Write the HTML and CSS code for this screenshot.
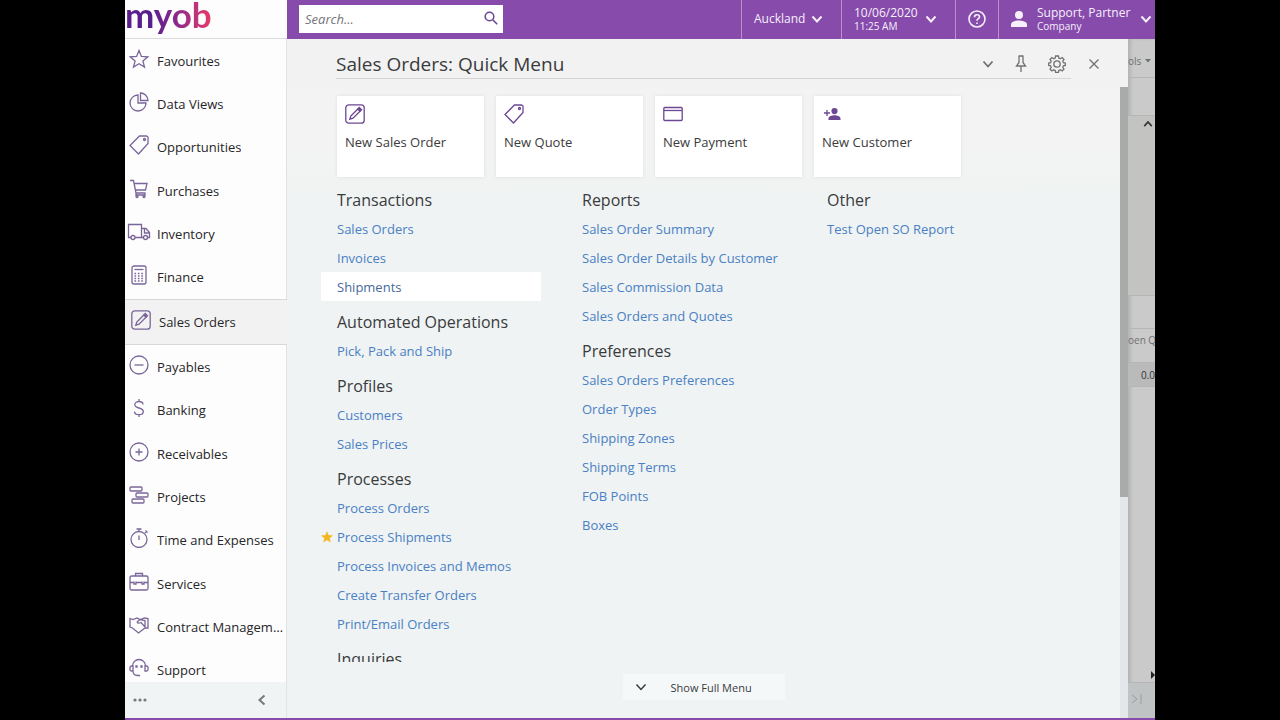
FILE: index.html
```html
<!DOCTYPE html>
<html lang="en">
<head>
    <meta charset="UTF-8">
    <meta name="viewport" content="width=device-width, initial-scale=1.0">
    <title>Sales Orders: Quick Menu</title>
    <link rel="stylesheet" href="styles.css">
</head>
<body>
    <!-- shared icons -->
    <svg class="defs" aria-hidden="true">
        <symbol id="chevron" viewBox="0 0 12 12"><path d="M1.5 3.5 6 8.5l4.5-5"/></symbol>
        <symbol id="pencil" viewBox="0 0 20 20"><rect x=".8" y=".8" width="18.4" height="18.4" rx="3"/><path d="m4.800 15.200 1-3.200 7-7 2.200 2.200-7 7z"/><path class="solid" d="m13 4.800 1.300-1.300 2.200 2.200L15.200 7z"/></symbol>
        <symbol id="tag" viewBox="0 0 20 20"><path d="M10.500 1H17.500L19 2v6.500L9.500 19 1 10.500z"/><circle cx="15.500" cy="4.500" r="1"/></symbol>
        <symbol id="star" viewBox="0 0 20 20"><path d="m10 1.500 2.400 5.900 6.400.4-4.900 4.100 1.600 6.200L10 14.700l-5.500 3.400 1.600-6.200-4.900-4.100 6.400-.4z"/></symbol>
    </svg>

    <div class="app">
        <aside class="sidebar">
            <div class="brand"><a href="#" class="logo">myob</a></div>
            <nav class="modules">
                <ul>
                    <li><a href="#"><svg class="icon"><use href="#star"/></svg><span>Favourites</span></a></li>
                    <li><a href="#"><svg class="icon" viewBox="0 0 20 20"><path d="M9 3a8 8 0 1 0 8 8H9z"/><path d="M11.500 1v7.500H19A7.500 7.500 0 0 0 11.500 1z"/></svg><span>Data Views</span></a></li>
                    <li><a href="#"><svg class="icon"><use href="#tag"/></svg><span>Opportunities</span></a></li>
                    <li><a href="#"><svg class="icon" viewBox="0 0 20 20"><path d="M1 1.500h3.500L7 14h9.500M5 4.500h13L16.500 11H6.500M7 14v2h9v-2"/><circle cx="8" cy="17.500" r="1"/><circle cx="15" cy="17.500" r="1"/></svg><span>Purchases</span></a></li>
                    <li><a href="#"><svg class="icon wide" viewBox="0 0 24 20"><path d="M4 15.500H1.500V2.500h13v13H8M14.500 6.500h4.500l3.500 4v5H21M16 15.500h-1.500M17.500 6.500v4.500h5"/><circle cx="6" cy="15.500" r="2"/><circle cx="18.500" cy="15.500" r="2"/></svg><span>Inventory</span></a></li>
                    <li><a href="#"><svg class="icon" viewBox="0 0 20 20"><rect x="3" y="1" width="14" height="18" rx="2"/><path d="M5.500 4.500h9"/><path stroke-dasharray="1.600 1.800" d="M5.500 8.500h9M5.500 11h9M5.500 13.500h9M5.500 16h9"/></svg><span>Finance</span></a></li>
                    <li class="active"><a href="#"><svg class="icon"><use href="#pencil"/></svg><span>Sales Orders</span></a></li>
                    <li><a href="#"><svg class="icon" viewBox="0 0 20 20"><circle cx="10" cy="10" r="9"/><path d="M5.500 10h9"/></svg><span>Payables</span></a></li>
                    <li><a href="#"><svg class="icon" viewBox="0 0 20 20"><path d="M14 6.500C14 4.500 12 3.500 10 3.500S5.800 4.500 5.800 6.500 8 9.500 10 10s4.300 1.300 4.300 3.500-2 3.200-4.300 3.200-4.500-1.200-4.500-3.200M10 1v2.500M10 16.700V19"/></svg><span>Banking</span></a></li>
                    <li><a href="#"><svg class="icon" viewBox="0 0 20 20"><circle cx="10" cy="10" r="9"/><path d="M6.500 10h7M10 6.500v7"/></svg><span>Receivables</span></a></li>
                    <li><a href="#"><svg class="icon" viewBox="0 0 20 20"><rect x="1" y="2" width="12" height="4" rx="1"/><rect x="7" y="8" width="12" height="4" rx="1"/><rect x="3" y="14" width="12" height="4" rx="1"/></svg><span>Projects</span></a></li>
                    <li><a href="#"><svg class="icon" viewBox="0 0 20 20"><circle cx="10" cy="11.500" r="8"/><path d="M7.500 1h5M10 1v2.500M10 7.500v4.500M16 5l1.500-1.500M16.500 2.500l2 2"/></svg><span>Time and Expenses</span></a></li>
                    <li><a href="#"><svg class="icon" viewBox="0 0 20 20"><rect x="1" y="4" width="18" height="14" rx="1.500"/><path d="M6.500 4V1.500h7V4M1 10.500h4m2 0h6m2 0h4M5 9.500v2.500h2V9.500M13 9.500v2.500h2V9.500"/></svg><span>Services</span></a></li>
                    <li><a href="#"><svg class="icon" viewBox="0 0 20 20"><path d="M1 3.500l3 1 4-1.500 3 1.500L15.500 3l3.500.5V13h-3l-6.500 5-6-5L1 12zM8 7l3-2.500 5 1V13M8 7c1 2 3 1 4 .5l4 4.500"/></svg><span>Contract Management</span></a></li>
                    <li><a href="#"><svg class="icon" viewBox="0 0 20 20"><path d="M3.500 8a6.500 6.500 0 0 1 13 0M4 8H2.500A1.500 1.500 0 0 0 1 9.500v2A1.500 1.500 0 0 0 2.500 13H4zM16 8h1.500A1.500 1.500 0 0 1 19 9.500v2a1.500 1.500 0 0 1-1.500 1.500H16zM4 13c0 3 2 4.500 4.500 4.500H11"/><path class="solid" d="M7 8h1v1H7zM12 8h1v1h-1z"/></svg><span>Support</span></a></li>
                </ul>
            </nav>
            <div class="sidebar-footer">
                <button type="button" aria-label="More items"><svg width="14" height="4" viewBox="0 0 14 4"><circle cx="2" cy="2" r="1.600"/><circle cx="7" cy="2" r="1.600"/><circle cx="12" cy="2" r="1.600"/></svg></button>
                <button type="button" aria-label="Collapse"><svg class="chevron left"><use href="#chevron"/></svg></button>
            </div>
        </aside>

        <div class="main">
            <header class="topbar">
                <form class="search">
                    <input type="search" placeholder="Search..." aria-label="Search">
                    <button type="submit" aria-label="Search"><svg width="14" height="14" viewBox="0 0 14 14"><circle cx="5.500" cy="5.500" r="4.300"/><path d="m8.700 8.700 4.500 4.500"/></svg></button>
                </form>
                <button type="button" class="branch"><span>Auckland</span><svg class="chevron"><use href="#chevron"/></svg></button>
                <button type="button" class="date"><span>10/06/2020<small>11:25 AM</small></span><svg class="chevron"><use href="#chevron"/></svg></button>
                <button type="button" class="help" aria-label="Help"><svg width="18" height="18" viewBox="0 0 18 18"><circle cx="9" cy="9" r="8"/><path d="M6.500 7.200C6.500 5.500 7.600 4.700 9 4.700s2.500.9 2.500 2.200C11.500 8.700 9 8.700 9 10.700"/><path d="M9 12.400v1.500"/></svg></button>
                <button type="button" class="user">
                    <svg class="person" width="16" height="16" viewBox="0 0 16 16"><circle cx="8" cy="4" r="4"/><path d="M0 16v-2.500C0 10.500 5 9.500 8 9.500s8 1 8 4V16z"/></svg>
                    <span>Support, Partner<small>Company</small></span>
                    <svg class="chevron"><use href="#chevron"/></svg>
                </button>
            </header>

            <div class="workspace">
                <section class="panel">
                    <div class="panel-header">
                        <div class="panel-title">
                            <h1>Sales Orders: Quick Menu</h1>
                            <button type="button" aria-label="Expand"><svg class="chevron"><use href="#chevron"/></svg></button>
                            <button type="button" aria-label="Pin"><svg width="12" height="18" viewBox="0 0 12 18"><path d="M3.500 1h5M4 1v6.500L1.500 11h9L8 7.500V1M6 11v6"/></svg></button>
                            <button type="button" aria-label="Settings"><svg width="18" height="18" viewBox="0 0 18 18"><circle cx="9" cy="9" r="3.200"/><path d="M7.600 1h2.800l.4 2.100 1.500.6 1.800-1.200 1.900 1.900-1.200 1.800.6 1.500 1.900.4v2.300l-1.900.4-.6 1.500 1.200 1.800-1.900 1.900-1.800-1.200-1.500.6-.4 1.900H7.600l-.4-1.900-1.500-.6-1.800 1.200L2 14.100l1.200-1.800-.6-1.500-1.900-.4V8.100l1.900-.4.6-1.500L2 4.400l1.900-1.900 1.800 1.200 1.500-.6z"/></svg></button>
                        </div>
                        <button type="button" aria-label="Close"><svg width="12" height="12" viewBox="0 0 12 12"><path d="m1.500 1.500 9 9m0-9-9 9"/></svg></button>
                    </div>

                    <div class="panel-body">
                        <div class="panel-content">
                            <div class="scroll-area">
                                <div class="tiles">
                                    <a href="#" class="tile"><svg class="icon"><use href="#pencil"/></svg>New Sales Order</a>
                                    <a href="#" class="tile"><svg class="icon"><use href="#tag"/></svg>New Quote</a>
                                    <a href="#" class="tile"><svg class="icon" viewBox="0 0 20 20"><rect x=".8" y="3.500" width="18.400" height="13" rx="1"/><path d="M1 6.500h18"/></svg>New Payment</a>
                                    <a href="#" class="tile"><svg class="icon" viewBox="0 0 20 20"><path d="M2 9h6M5 6v6"/><path class="solid flat" d="M12.500 4a3 3 0 1 1 0 6.200 3 3 0 0 1 0-6.200zM6.500 16v-1.500c0-2.200 3.500-3.300 6-3.300s6 1.100 6 3.300V16z"/></svg>New Customer</a>
                                </div>

                                <div class="columns">
                                    <div class="column">
                                        <h2>Transactions</h2>
                                        <ul>
                                            <li><a href="#">Sales Orders</a></li>
                                            <li><a href="#">Invoices</a></li>
                                            <li class="hover"><a href="#">Shipments</a></li>
                                        </ul>
                                        <h2>Automated Operations</h2>
                                        <ul>
                                            <li><a href="#">Pick, Pack and Ship</a></li>
                                        </ul>
                                        <h2>Profiles</h2>
                                        <ul>
                                            <li><a href="#">Customers</a></li>
                                            <li><a href="#">Sales Prices</a></li>
                                        </ul>
                                        <h2>Processes</h2>
                                        <ul>
                                            <li><a href="#">Process Orders</a></li>
                                            <li class="favourite"><svg><use href="#star"/></svg><a href="#">Process Shipments</a></li>
                                            <li><a href="#">Process Invoices and Memos</a></li>
                                            <li><a href="#">Create Transfer Orders</a></li>
                                            <li><a href="#">Print/Email Orders</a></li>
                                        </ul>
                                        <h2>Inquiries</h2>
                                    </div>
                                    <div class="column">
                                        <h2>Reports</h2>
                                        <ul>
                                            <li><a href="#">Sales Order Summary</a></li>
                                            <li><a href="#">Sales Order Details by Customer</a></li>
                                            <li><a href="#">Sales Commission Data</a></li>
                                            <li><a href="#">Sales Orders and Quotes</a></li>
                                        </ul>
                                        <h2>Preferences</h2>
                                        <ul>
                                            <li><a href="#">Sales Orders Preferences</a></li>
                                            <li><a href="#">Order Types</a></li>
                                            <li><a href="#">Shipping Zones</a></li>
                                            <li><a href="#">Shipping Terms</a></li>
                                            <li><a href="#">FOB Points</a></li>
                                            <li><a href="#">Boxes</a></li>
                                        </ul>
                                    </div>
                                    <div class="column">
                                        <h2>Other</h2>
                                        <ul>
                                            <li><a href="#">Test Open SO Report</a></li>
                                        </ul>
                                    </div>
                                </div>
                            </div>
                            <div class="panel-footer">
                                <button type="button"><svg class="chevron"><use href="#chevron"/></svg>Show Full Menu</button>
                            </div>
                        </div>
                        <div class="scrollbar"><div class="thumb"></div></div>
                    </div>
                </section>

                <!-- edge of the form that sits behind the menu -->
                <div class="behind">
                    <div class="behind-tools"><span>ols</span><svg width="6" height="4" viewBox="0 0 6 4"><path d="M0 0h6L3 3.500z"/></svg></div>
                    <div class="behind-row"></div>
                    <div class="behind-form"><svg class="chevron up"><use href="#chevron"/></svg></div>
                    <div class="behind-tabs"></div>
                    <div class="behind-head">oen Qt</div>
                    <div class="behind-cell">0.0</div>
                    <div class="behind-grid"></div>
                    <div class="behind-scroll"><svg width="4" height="8" viewBox="0 0 4 8"><path d="M0 0v8l4-4z"/></svg></div>
                    <div class="behind-pager"><svg width="11" height="10" viewBox="0 0 11 10"><path d="m1 1 5 4-5 4M10 0v10"/></svg></div>
                </div>
            </div>
        </div>
    </div>

    <svg class="cursor" width="10" height="16" viewBox="0 0 10 16" aria-hidden="true"><path d="M.7.900v12l2.900-2.600 1.900 4.500 2-.9-1.900-4.200 3.600-.2z"/></svg>
</body>
</html>
```
FILE: styles.css
```css
:root {
    --purple: #864bab;
    --purple-dark: #6c4794;
    --icon: #7a6699;
    --link: #4a80c4;
    --text: #3a3b3d;
    --grey: #f2f2f2;
    --mist: #eff3f3;
    --behind: #c9cac9;
}
* {
    box-sizing: border-box;
}
body {
    margin: 0;
    background: #000;
    color: var(--text);
    font-family: "Open Sans", "Noto Sans", sans-serif;
    font-size: 13px;
}
a {
    color: inherit;
    text-decoration: none;
}
ul {
    list-style: none;
    margin: 0;
    padding: 0;
}
button {
    display: flex;
    align-items: center;
    margin: 0;
    padding: 0;
    border: none;
    background: none;
    color: inherit;
    font: inherit;
    text-align: left;
    cursor: pointer;
}
svg {
    flex: none;
    fill: none;
    stroke: currentColor;
}
.defs {
    position: absolute;
    width: 0;
    height: 0;
}
.solid {
    fill: currentColor;
}
.flat {
    stroke: none;
}
.icon {
    width: 20px;
    height: 20px;
    color: var(--icon);
    stroke-width: 1.3;
}
.icon.wide {
    width: 24px;
    margin: 0 -2px;
}
.chevron {
    width: 12px;
    height: 12px;
    stroke-width: 2;
}
.chevron.left {
    transform: rotate(90deg);
}
.chevron.up {
    transform: rotate(180deg);
}

.app {
    display: flex;
    height: 100vh;
    margin: 0 125px;
    border-bottom: 2px solid var(--purple);
    background: var(--grey);
}

/* sidebar */
.sidebar {
    display: flex;
    flex-direction: column;
    flex: none;
    width: 162px;
    background: #fdfdfd;
}
.brand {
    flex: none;
    height: 39px;
    border-bottom: 1px solid #dcdcde;
}
.logo {
    display: inline-block;
    height: 38px;
    background: linear-gradient(90deg, #5a1d8c 30%, #8b2b8c 60%, #ea3a68);
    -webkit-background-clip: text;
    background-clip: text;
    color: transparent;
    font-family: Lato, sans-serif;
    font-size: 35px;
    font-weight: 700;
    line-height: 28px;
}
.modules {
    flex: 1;
    min-height: 0;
    overflow: hidden;
}
.modules ul {
    display: flex;
    flex-direction: column;
    height: calc(100% + 10px);
}
.modules li {
    flex: 1;
    display: flex;
    border-right: 1px solid #e2e2e4;
}
.modules a {
    flex: 1;
    min-width: 0;
    display: flex;
    align-items: center;
    gap: 8px;
    padding: 0 2px 0 4px;
    color: #262628;
}
.modules .icon {
    margin-bottom: 4px;
}
.modules span {
    overflow: hidden;
    text-overflow: ellipsis;
    white-space: nowrap;
}
.modules .active {
    flex: none;
    height: 46px;
    border-top: 1px solid #d8d8da;
    border-right: none;
    border-bottom: 1px solid #d8d8da;
    background: var(--grey);
}
.modules .active a {
    padding-left: 6px;
}
.sidebar-footer {
    flex: none;
    display: flex;
    align-items: center;
    justify-content: space-between;
    height: 36px;
    padding: 0 18px 0 8px;
    border-right: 1px solid #e2e2e4;
    background: #f1f4f5;
    color: #77787c;
}
.sidebar-footer circle {
    fill: currentColor;
    stroke: none;
}

/* top bar */
.main {
    flex: 1;
    min-width: 0;
    display: flex;
    flex-direction: column;
}
.topbar {
    flex: none;
    display: flex;
    height: 39px;
    background: var(--purple);
    color: #f7effb;
}
.search {
    display: flex;
    width: 204px;
    height: 28px;
    margin: 5px auto 0 12px;
    background: #fff;
    color: var(--purple-dark);
}
.search input {
    flex: 1;
    min-width: 0;
    padding: 0 6px;
    border: none;
    background: none;
    font: inherit;
    outline: none;
}
.search input::placeholder {
    color: #757579;
    font-style: italic;
}
.search button {
    padding: 0 5px 2px;
}
.search svg {
    stroke-width: 1.6;
}
.topbar > button {
    justify-content: space-between;
    padding: 0 18px 2px 12px;
    border-left: 1px solid #b691cb;
    font-size: 12px;
    line-height: 15px;
}
.topbar small {
    display: block;
    font-size: 10px;
    line-height: 13px;
}
.branch {
    width: 100px;
}
.date {
    width: 114px;
}
.topbar .help {
    width: 43px;
}
.help svg {
    stroke-width: 1.6;
}
.topbar .user {
    gap: 10px;
    width: 157px;
    padding-right: 7px;
}
.user span {
    flex: 1;
    white-space: nowrap;
}
.person {
    fill: currentColor;
    stroke: none;
}

/* quick menu panel */
.workspace {
    flex: 1;
    min-height: 0;
    display: flex;
}
.panel {
    flex: 1;
    min-width: 0;
    display: flex;
    flex-direction: column;
    z-index: 1;
}
.panel-header {
    flex: none;
    display: flex;
    gap: 17px;
    height: 48px;
    padding: 0 28px 8px 49px;
    background: var(--grey);
    color: #707174;
}
.panel-title {
    flex: 1;
    display: flex;
    align-items: center;
    gap: 21px;
    padding: 10px 5px 0 0;
    border-bottom: 1px solid #d6d6d8;
}
.panel-header > button {
    padding-top: 10px;
}
.panel-header svg {
    stroke-width: 1.3;
}
.panel-header .chevron {
    stroke-width: 1.8;
}
h1 {
    margin: 0 auto 0 0;
    color: var(--text);
    font-size: 19px;
    font-weight: 400;
    line-height: 24px;
}
.panel-body {
    flex: 1;
    min-height: 0;
    display: flex;
}
.panel-content {
    flex: 1;
    min-width: 0;
    display: flex;
    flex-direction: column;
    background: linear-gradient(#f3f3f3 60px, var(--mist) 130px);
}
.scroll-area {
    flex: 1;
    min-height: 0;
    overflow: hidden;
    padding: 9px 34px 0;
}
.tiles {
    display: flex;
    gap: 12px;
    padding-left: 16px;
}
.tile {
    display: flex;
    flex-direction: column;
    gap: 8px;
    width: 147px;
    height: 81px;
    padding: 8px;
    background: #fff;
    box-shadow: 0 0 4px rgba(0,0,0,0.08);
    font-weight: 500;
    line-height: 20px;
}
.tile .icon {
    color: var(--purple-dark);
}
.columns {
    display: flex;
    gap: 25px;
    padding-top: 9px;
}
.column {
    width: 220px;
}
h2 {
    margin: 7px 0 0;
    padding-left: 16px;
    font-size: 16px;
    font-weight: 400;
    line-height: 28px;
}
.column h2:first-child {
    margin-top: 0;
}
.column li {
    display: flex;
    align-items: center;
    height: 29px;
    padding-left: 16px;
    color: var(--link);
    white-space: nowrap;
}
.column .hover {
    background: #fff;
    color: #47699c;
}
.column .favourite {
    gap: 4px;
    padding-left: 0;
}
.favourite svg {
    width: 12px;
    height: 12px;
    color: #f3b61f;
    fill: currentColor;
}
.panel-footer {
    flex: none;
    display: flex;
    justify-content: center;
    height: 56px;
    padding-top: 12px;
}
.panel-footer button {
    gap: 24px;
    width: 162px;
    height: 26px;
    padding: 0 12px;
    background: #f5f8f9;
    font-size: 11px;
}
.panel-footer .chevron {
    stroke-width: 1.5;
}
.scrollbar {
    flex: none;
    display: flex;
    flex-direction: column;
    justify-content: flex-end;
    width: 8px;
    background: #a8abaa;
}
.thumb {
    height: 35%;
    background: #e3e7e9;
}

/* page behind the panel */
.behind {
    flex: none;
    display: flex;
    flex-direction: column;
    width: 27px;
    overflow: hidden;
    background: var(--behind);
    box-shadow: inset 3px 0 3px rgba(0,0,0,0.1);
    color: #707172;
    font-size: 10px;
    white-space: nowrap;
}
.behind > div {
    flex: none;
    border-bottom: 1px solid #b5b6b5;
}
.behind-tools {
    display: flex;
    align-items: center;
    gap: 4px;
    height: 39px;
    padding-top: 5px;
}
.behind-tools svg,
.behind-scroll svg {
    fill: currentColor;
    stroke: none;
}
.behind-row {
    height: 38px;
}
.behind-form {
    height: 180px;
    padding: 2px 2px;
    background: #c3c4c2;
    color: #333;
    text-align: right;
}
.behind-form .chevron {
    width: 10px;
    height: 10px;
}
.behind-tabs {
    height: 33px;
}
.behind-head {
    height: 34px;
    line-height: 22px;
}
.behind-cell {
    height: 24px;
    background: #b9bab9;
    color: #333;
    line-height: 24px;
    text-align: right;
}
.behind .behind-grid {
    flex: 1;
    border: none;
}
.behind-scroll {
    height: 16px;
    color: #222;
    line-height: 16px;
    text-align: right;
}
.behind .behind-pager {
    height: 35px;
    padding: 10px 3px;
    border: none;
    background: #bfc3c3;
    color: #9a9d9d;
}

.cursor {
    position: absolute;
    left: 64%;
    top: 492px;
    fill: #fff;
    stroke: #444;
}
```
